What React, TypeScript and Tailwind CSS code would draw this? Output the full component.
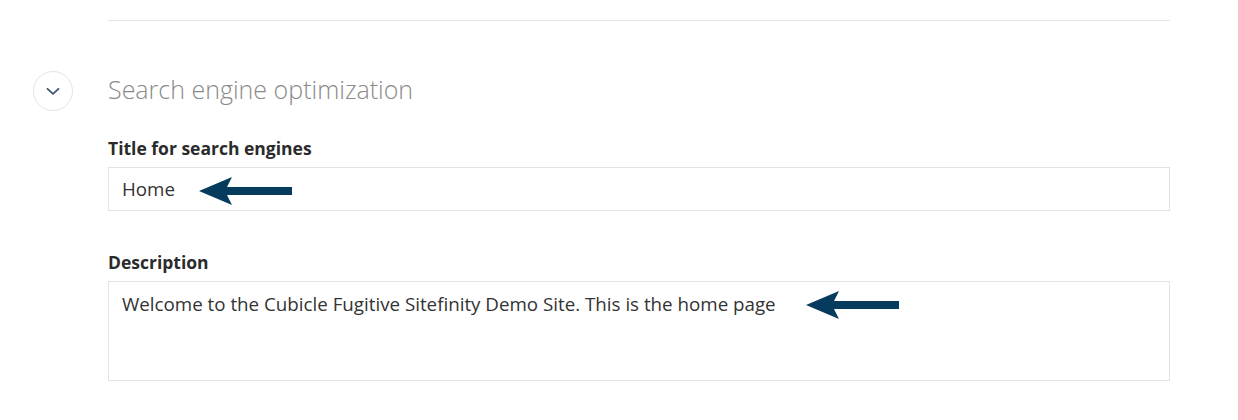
import React from 'react';

function Arrow({ className }: { className?: string }) {
  return (
    <svg
      className={className}
      width="93"
      height="28"
      viewBox="0 0 93 28"
      aria-hidden
    >
      <polygon
        points="0,14 33,0 28,10 93,10 93,18 28,18 33,28"
        fill="#053b5c"
      />
    </svg>
  );
}

function Field({
  label,
  value,
  tall,
  gap
}: {
  label: string;
  value: string;
  tall?: boolean;
  gap: string;
}) {
  return (
    <div>
      <label className="block text-[17.5px] leading-6 font-bold text-[#2b2b2b]">{label}</label>
      <div
        className={
          'mt-[7px] flex border border-[#e2e2e2] bg-white px-[13px] text-[18.75px] leading-[26px] text-[#333] ' +
          (tall ? 'h-[100px] items-start pt-[9px]' : 'h-[44px] items-center')
        }
      >
        <span>{value}</span>
        <Arrow className={gap + ' shrink-0'} />
      </div>
    </div>
  );
}

export default function App() {
  return (
    <div
      className="min-h-[420px] w-[1238px] bg-white pt-5"
      style={{ fontFamily: '"Open Sans", "Noto Sans", sans-serif' }}
    >
      <div className="ml-[108px] w-[1062px] border-t border-[#e6e6e6]" />

      <div className="mt-[50px] flex items-center">
        <button
          type="button"
          className="ml-[33px] flex size-10 items-center justify-center rounded-full border border-[#e4e4e4] bg-white"
          aria-label="Collapse"
        >
          <svg width="14" height="9" viewBox="0 0 14 9" aria-hidden>
            <path
              d="M1.5 1.8 L7 6.8 L12.5 1.8"
              fill="none"
              stroke="#3d5670"
              strokeWidth="1.8"
              strokeLinecap="round"
              strokeLinejoin="round"
            />
          </svg>
        </button>
        <h2 className="ml-[35px] -mt-1 text-[25px] leading-[30px] font-light text-[#8a8a8a]">
          Search engine optimization
        </h2>
      </div>

      <div className="ml-[108px] mt-[25px] w-[1062px]">
        <Field label="Title for search engines" value="Home" gap="ml-6 mt-[3px]" />
        <div className="mt-[39px]">
          <Field
            label="Description"
            value="Welcome to the Cubicle Fugitive Sitefinity Demo Site. This is the home page"
            tall
            gap="ml-[30px] mt-0"
          />
        </div>
      </div>
    </div>
  );
}
